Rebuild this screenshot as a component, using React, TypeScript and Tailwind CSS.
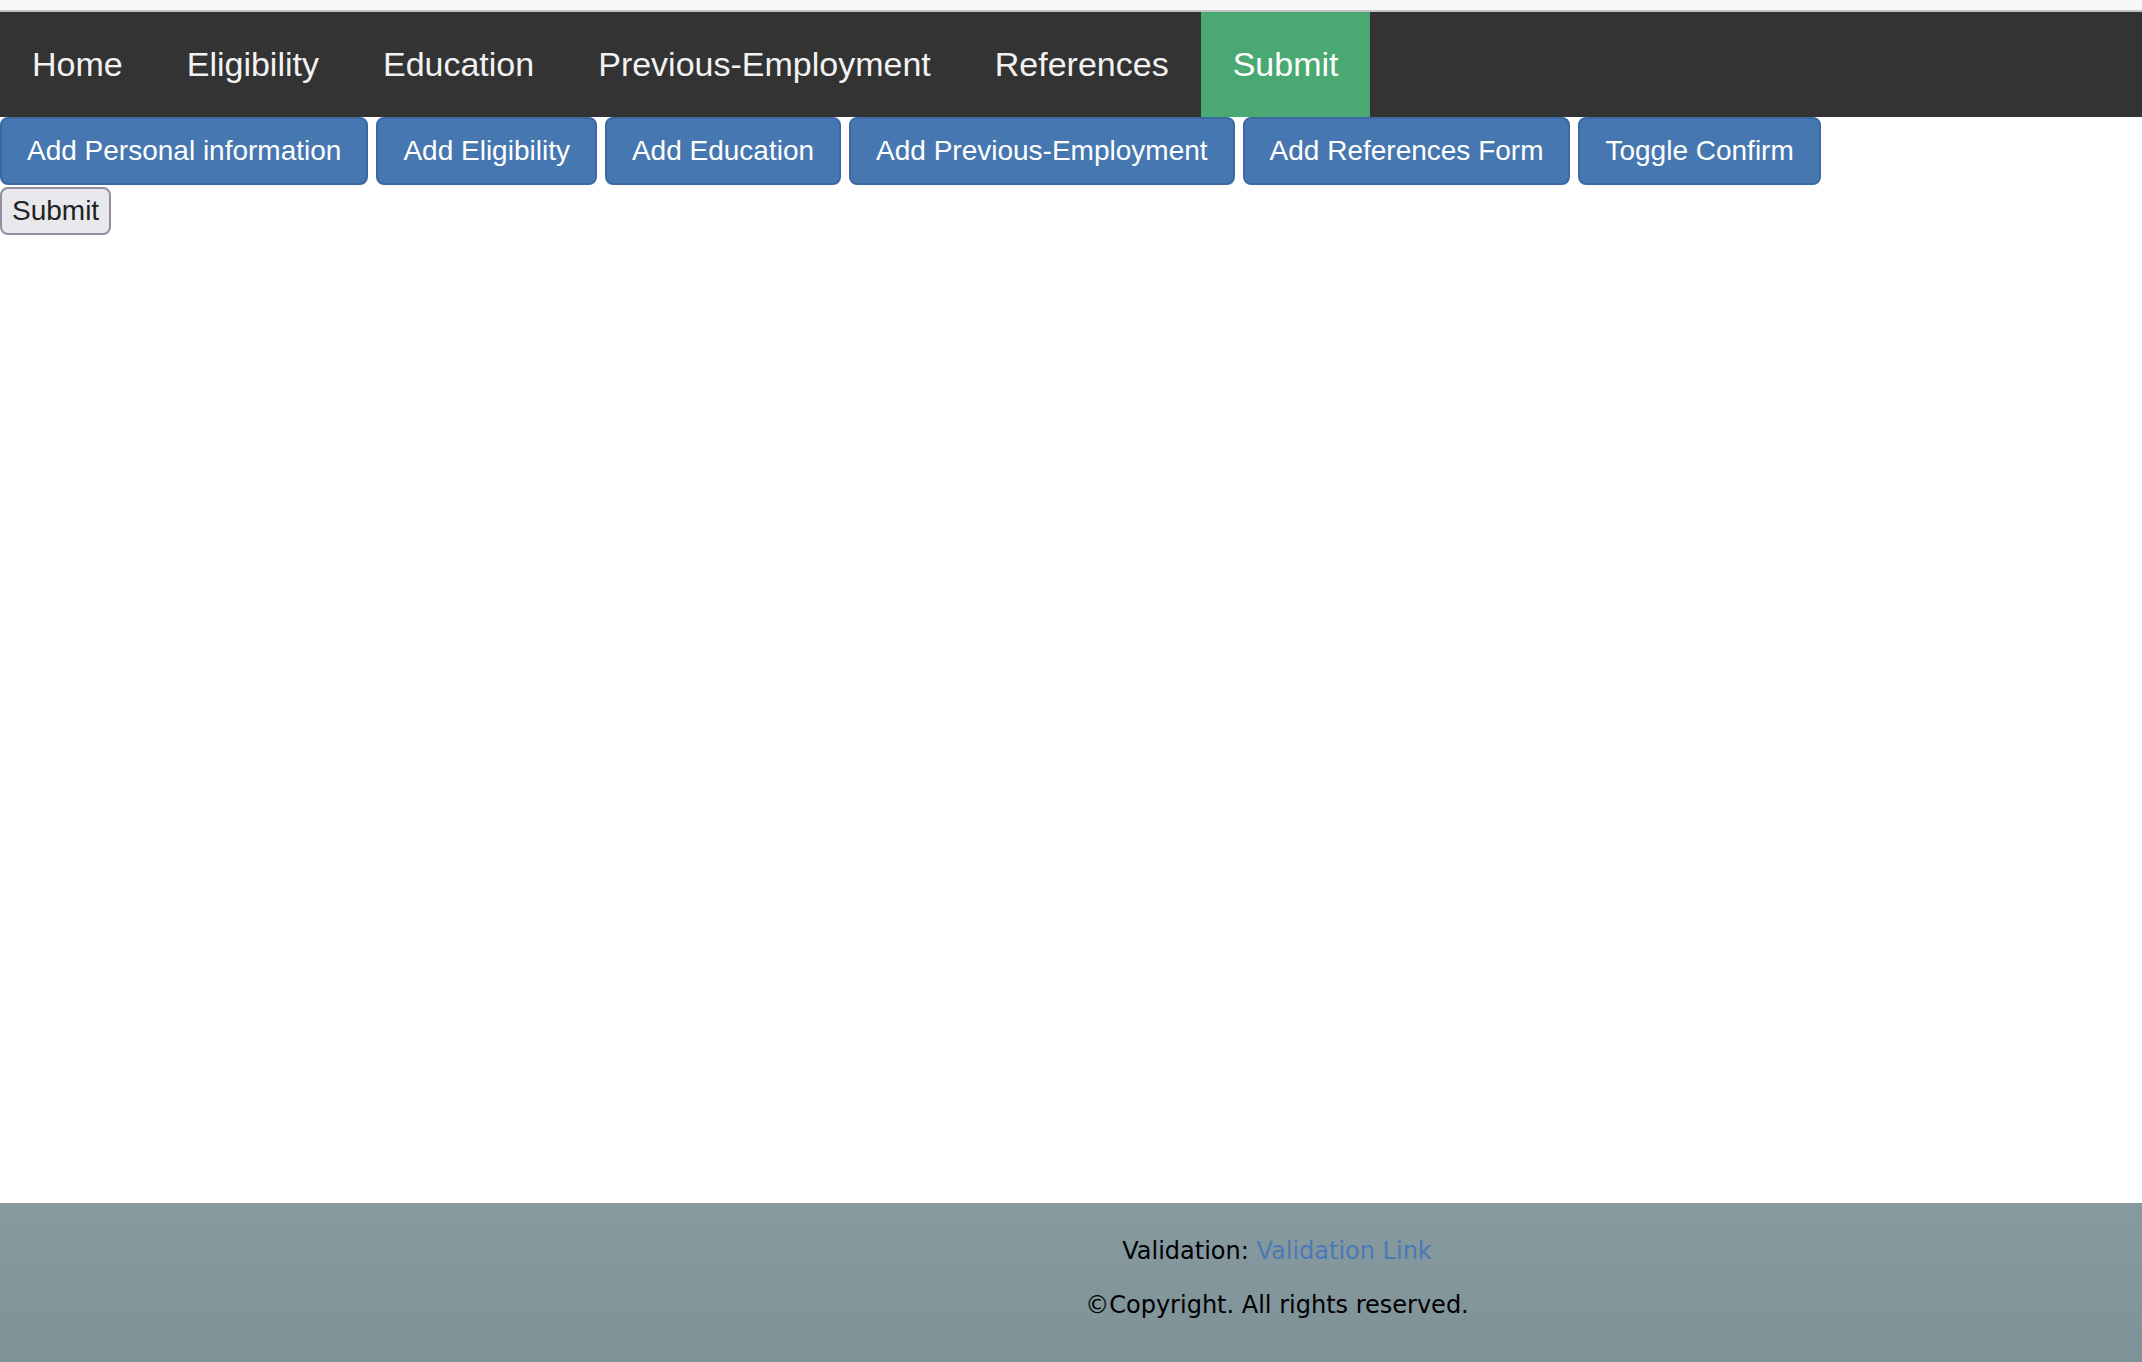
import React from 'react';

const navItems = ['Home', 'Eligibility', 'Education', 'Previous-Employment', 'References', 'Submit'];

const formButtons = [
  'Add Personal information',
  'Add Eligibility',
  'Add Education',
  'Add Previous-Employment',
  'Add References Form',
  'Toggle Confirm',
];

export default function App() {
  return (
    <div className="h-[1362px] flex flex-col bg-white font-['Liberation_Sans',Arial,sans-serif] overflow-hidden">
      {/* browser chrome strip */}
      <div className="h-[12px] bg-[#f7f7fa] border-b-2 border-[#c4c4c6] shrink-0"></div>

      <nav className="flex bg-[#333333] shrink-0">
        {navItems.map((item) => (
          <a
            key={item}
            href="#"
            className={`px-[32px] py-[28px] text-[34px] leading-[49px] text-[#f2f2f2] ${
              item === 'Submit' ? 'bg-[#4aa872] text-white' : ''
            }`}
          >
            {item}
          </a>
        ))}
      </nav>

      <main className="flex-1">
        <div className="flex flex-wrap gap-[8px]">
          {formButtons.map((label) => (
            <button
              key={label}
              className="px-[25px] py-[12px] text-[28px] leading-[40px] text-white bg-[#4677b0] border-2 border-[#3b6aa2] rounded-[8px]"
            >
              {label}
            </button>
          ))}
        </div>
        <button className="mt-[2px] px-[10px] py-[5px] text-[28px] leading-[34px] text-[#222] bg-[#e9e9ed] border-2 border-[#8f8f9d] rounded-[8px]">
          Submit
        </button>
      </main>

      <footer className="h-[159px] shrink-0 bg-gradient-to-b from-[#879aa0] to-[#7f9298] pl-[412px] pt-[30px] text-center font-['DejaVu_Sans',Verdana,sans-serif] text-[24px] text-black">
        <p className="leading-[36px]">
          Validation: <a href="#" className="text-[#4a7ab6]">Validation Link</a>
        </p>
        <p className="mt-[18px] leading-[36px]">©Copyright. All rights reserved.</p>
      </footer>
    </div>
  );
}
